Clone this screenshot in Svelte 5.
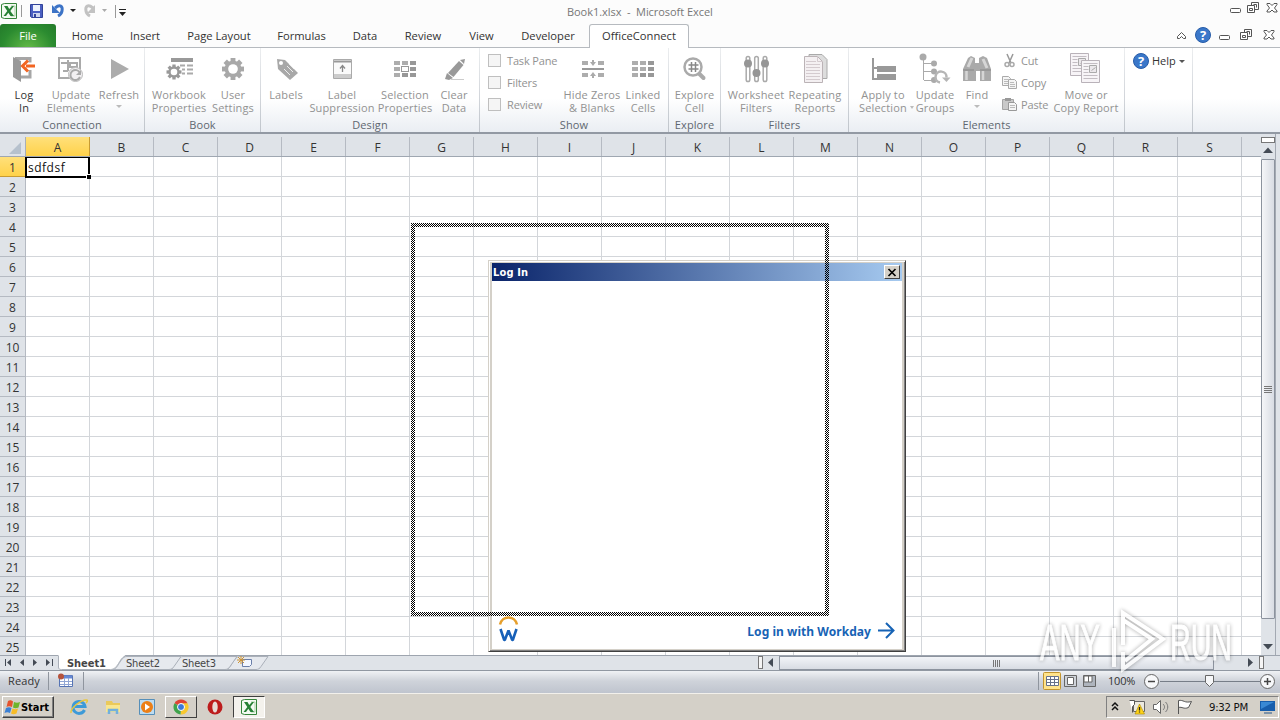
<script lang="ts">
  type Button = { icon: string; lines: string[]; width: number; enabled?: boolean; arrow?: boolean }
  type Small = { label: string; icon?: string }
  type Group = { title: string; width: number; pad?: number; items: (Button | Small[])[] }

  const gear = (cx: number, cy: number, r: number, color = '#a8a8a8') => {
    const teeth = [0, 45, 90, 135]
      .map((a) => `<rect x="${cx - r * 0.22}" y="${cy - r}" width="${r * 0.44}" height="${r * 2}" transform="rotate(${a} ${cx} ${cy})" fill="${color}"/>`)
      .join('')
    return `${teeth}<circle cx="${cx}" cy="${cy}" r="${r * 0.76}" fill="${color}"/><circle cx="${cx}" cy="${cy}" r="${r * 0.44}" fill="#fff"/>`
  }

  const cells = (skip = -1) =>
    Array.from({ length: 9 }, (_, i) => {
      const x = 5 + (i % 3) * 8
      const y = 8 + Math.floor(i / 3) * 6
      return i === skip
        ? `<rect x="${x - 0.5}" y="${y - 0.5}" width="7" height="5" fill="#fff" stroke="#999"/>`
        : `<rect x="${x}" y="${y}" width="6" height="4" fill="${i % 3 === 2 || i > 6 ? '#989898' : '#adadad'}"/>`
    }).join('')

  const page = (x: number, y: number) =>
    `<path d="M${x} ${y}h18v22h-18z" fill="#f7f4f7" stroke="#b9b2b9"/><path d="M${x + 2} ${y + 3}h14M${x + 2} ${y + 6}h5M${x + 2} ${y + 9}h5M${x + 2} ${y + 12}h5M${x + 2} ${y + 15}h14M${x + 2} ${y + 18}h14" stroke="#c3bdc3"/><path d="M${x + 8} ${y + 5}h7v7h-7zm2 5 4-3" fill="#ebe7eb" stroke="#aaa"/>`

  const icons: Record<string, string> = {
    login: `<path d="M7 5.500h15v4M22 17v7h-11" fill="none" stroke="#a6a6a6" stroke-width="3"/><path d="M5 4l8 4v21l-8-5z" fill="#999"/><path d="M27 13h-9" stroke="#f26522" stroke-width="3"/><path d="M20 7.500L14.500 13l5.500 5.500" fill="none" stroke="#f26522" stroke-width="3"/>`,
    update: `<path d="M4 5h21v20H4z" fill="#fff" stroke="#aaa" stroke-width="2"/><path d="M6 10h7V7M13 10v8M15 10h7v4h-7zM8 18h5" fill="none" stroke="#aaa" stroke-width="2"/><circle cx="20.500" cy="21.500" r="7" fill="#f2f0f2" stroke="#bbb"/><path d="M25 20a5 5 0 1 0 0 4" fill="none" stroke="#aaa" stroke-width="2"/><path d="M26 17v5h-5z" fill="#aaa"/>`,
    refresh: `<path d="M8 6l18 10-18 10z" fill="#acacac"/>`,
    workbook: `<path d="M8 5h22v4H8z" fill="#999"/><path d="M17 12.500h5M24 12.500h6M19 16.500h3M24 16.500h6M19 20.500h3M24 20.500h6" stroke="#aaa" stroke-width="2"/>${gear(11, 19, 7.5, '#999')}`,
    gear: gear(16, 16, 11),
    tag: `<path d="M7 6l8 1 13 13-8 7L8 16z" fill="#a8a8a8"/><circle cx="11" cy="10" r="2" fill="#fff"/><path d="M14 16l6 6M17 13l6 6M19 11l5 5" stroke="#ededed"/>`,
    suppress: `<path d="M7.500 6.500h18v19h-18z" fill="#fafafa" stroke="#aaa"/><path d="M8 8.500h17" stroke="#999" stroke-width="2"/><path d="M8 23h17" stroke="#ccc" stroke-width="4"/><path d="M16.500 19v-6M14 15.500l2.500-3 2.500 3" fill="none" stroke="#888" stroke-width="1.300"/>`,
    selection: cells(4),
    pencil: `<path d="M21 8l4.500 4-10 12-5.500-4z" fill="#999"/><path d="M22 7l5-1-1 5zM9 20l6 5-4 2-4-1z" fill="#999"/><path d="M13 26.500h13" stroke="#ccc"/>`,
    hide: `<path d="M6 16h22" stroke="#999" stroke-width="2"/><path d="M6 8h6v4H6zM22 8h6v4h-6zM6 20h6v4H6zM22 20h6v4h-6z" fill="#adadad"/><path d="M17 7v3M17 22v3" stroke="#aaa" stroke-width="2"/><path d="M14 9h6l-3 4zM14 23h6l-3-4z" fill="#aaa"/>`,
    linked: cells(),
    explore: `<circle cx="14" cy="14" r="8.500" fill="#fff" stroke="#aaa" stroke-width="2.500"/><path d="M20.500 21l4 4" stroke="#aaa" stroke-width="4" stroke-linecap="round"/><path d="M12.500 9v10M16.500 9v10M9.500 12h10M9.500 16h10" stroke="#888" stroke-width="1.500"/>`,
    sliders: [8, 16.5, 25]
      .map((x, i) => `<rect x="${x - 1.8}" y="3.500" width="3.600" height="25" rx="1.800" fill="#fff" stroke="#aaa" stroke-width="1.500"/><circle cx="${x}" cy="${i === 1 ? 20 : 10.5}" r="4" fill="#969696"/>`)
      .join(''),
    pages: `<path d="M10 1.500h13l5 5v19H10z" fill="#ddd" stroke="#aaa"/><path d="M5.500 3.500h13l5 5v21h-18z" fill="#f4f0f2" stroke="#bbb3b6"/><path d="M18.500 3.500v5h5M7 8.500h10M7 11.500h14M7 14.500h14M7 17.500h14M7 20.500h14M7 23.500h14M7 26.500h14" fill="none" stroke="#d4cbcf"/>`,
    apply: `<path d="M6 5v21h5M6 15h5" fill="none" stroke="#999" stroke-width="2"/><path d="M10 13h19v6H10zM10 21h19v6H10z" fill="#999"/>`,
    groups: `<path d="M4.500 4v23M5 10.500h10M5 18.500h10M5 27.500h10" stroke="#aaa"/><circle cx="4" cy="4" r="3.500" fill="#aaa"/><circle cx="15" cy="10.500" r="3" fill="#aaa"/><circle cx="15" cy="18.500" r="3" fill="#aaa"/><circle cx="15" cy="27" r="3" fill="#aaa"/><path d="M21 29.500a5.500 5.500 0 1 1 6.500-5" fill="none" stroke="#b5b5b5" stroke-width="2.500"/><path d="M23 24.500h8.500l-4 4.500z" fill="#b5b5b5"/>`,
    find: `<path d="M7 5l3-2 4 2v5h4V5l4-2 4 2 4 11v12h-11V18h-4v10H2V16z" fill="#aaa"/><path d="M7 14l4-9M22 6l4 9" stroke="#d6d6d6" stroke-width="3"/><path d="M5.500 18v9M22 18v9" stroke="#d6d6d6" stroke-width="2.500"/><path d="M2 17h11M19 17h11" stroke="#888"/>`,
    move: page(0.5, 0.5) + page(11.5, 7.5),
  }

  const smallIcons: Record<string, string> = {
    cut: `<path d="M5 1l4 9M11 1l-4 9" stroke="#999" stroke-width="1.500"/><circle cx="5" cy="11.500" r="2" fill="none" stroke="#aaa" stroke-width="1.500"/><circle cx="10" cy="11.500" r="2" fill="none" stroke="#aaa" stroke-width="1.500"/>`,
    copy: `<path d="M.5 1.500h6l2 2v7h-8z" fill="#f5f5f5" stroke="#aaa"/><path d="M6.500 4.500h6l2 2v7h-8z" fill="#f5f5f5" stroke="#aaa"/><path d="M2 4.500h4M2 6.500h4M2 8.500h4M8 7.500h4M8 9.500h5M8 11.500h5" stroke="#bbb"/>`,
    paste: `<path d="M.5 2.500h11v10H.5z" fill="#c9c9c9" stroke="#a5a5a5"/><path d="M3 1h6v3H3z" fill="#999"/><path d="M6.500 5.500h6l2 2v6h-8z" fill="#f5f5f5" stroke="#999"/><path d="M8 8.500h5M8 10.500h5" stroke="#bbb"/>`,
  }

  const groups: Group[] = [
    { title: 'Connection', width: 145, items: [
      { icon: 'login', lines: ['Log', 'In'], width: 48, enabled: true },
      { icon: 'update', lines: ['Update', 'Elements'], width: 46 },
      { icon: 'refresh', lines: ['Refresh'], width: 50, arrow: true },
    ] },
    { title: 'Book', width: 116, pad: 7, items: [
      { icon: 'workbook', lines: ['Workbook', 'Properties'], width: 54 },
      { icon: 'gear', lines: ['User', 'Settings'], width: 54 },
    ] },
    { title: 'Design', width: 219, items: [
      { icon: 'tag', lines: ['Labels'], width: 50 },
      { icon: 'suppress', lines: ['Label', 'Suppression'], width: 62 },
      { icon: 'selection', lines: ['Selection', 'Properties'], width: 64 },
      { icon: 'pencil', lines: ['Clear', 'Data'], width: 34 },
    ] },
    { title: 'Show', width: 189, pad: 8, items: [
      [{ label: 'Task Pane' }, { label: 'Filters' }, { label: 'Review' }],
      { icon: 'hide', lines: ['Hide Zeros', '& Blanks'], width: 56 },
      { icon: 'linked', lines: ['Linked', 'Cells'], width: 46 },
    ] },
    { title: 'Explore', width: 52, items: [{ icon: 'explore', lines: ['Explore', 'Cell'], width: 51 }] },
    { title: 'Filters', width: 128, pad: 6, items: [
      { icon: 'sliders', lines: ['Worksheet', 'Filters'], width: 58 },
      { icon: 'pages', lines: ['Repeating', 'Reports'], width: 60 },
    ] },
    { title: 'Elements', width: 276, pad: 7, items: [
      { icon: 'apply', lines: ['Apply to', 'Selection'], width: 54 },
      { icon: 'groups', lines: ['Update', 'Groups'], width: 50 },
      { icon: 'find', lines: ['Find'], width: 34, arrow: true },
      [{ label: 'Cut', icon: 'cut' }, { label: 'Copy', icon: 'copy' }, { label: 'Paste', icon: 'paste' }],
      { icon: 'move', lines: ['Move or', 'Copy Report'], width: 68 },
    ] },
  ]

  const tabs = [
    { name: 'Home', width: 63 },
    { name: 'Insert', width: 52 },
    { name: 'Page Layout', width: 96 },
    { name: 'Formulas', width: 69 },
    { name: 'Data', width: 58 },
    { name: 'Review', width: 58 },
    { name: 'View', width: 59 },
    { name: 'Developer', width: 74 },
  ]

  const columns = 'ABCDEFGHIJKLMNOPQRS'.split('')
  const rows = Array.from({ length: 25 }, (_, i) => i + 1)
</script>

{#snippet windowButtons(gap: number)}
  <svg class="winbtns" width={36 + gap * 2} height="13" fill="none" stroke="#555">
    <rect x=".5" y="6.500" width="10" height="4" rx="1" fill="#fff" />
    <g transform="translate({11 + gap} 0)">
      <path d="M4.500 .5h7v7h-7zM6.500 2.500h3v3" />
      <path d="M.5 3.500h7v7h-7z" fill="#fff" />
      <path d="M2.500 6.500h3v2h-3z" />
    </g>
    <path transform="translate({24 + gap * 2} 0)" d="M1 1.500h3l2 2 2-2h3v1l-2.500 3.500 2.500 3v1H8l-2-2-2 2H1v-1l2.500-3L1 2.500z" fill="#fff" />
  </svg>
{/snippet}

{#snippet help()}
  <svg width="16" height="16"><circle cx="8" cy="8" r="7.500" fill="#3a77c9" stroke="#275ca8" /><text x="8" y="12.500" text-anchor="middle" font-size="13" font-weight="bold" fill="#fff">?</text></svg>
{/snippet}

{#snippet excel(size: number)}
  <svg width={size} height={size} viewBox="0 0 16 16">
    <path d="M.5 1.500l3-1h12v15h-12l-3-1z" fill="#f4faf2" stroke="#35843a" />
    <path d="M10 3h4v10h-4" fill="none" stroke="#a8cfa6" />
    <path d="M3 3h3.500l1.700 3L11 3h2L9.300 8l3.700 5H9.500L7.300 9.800 5 13H2.500l3.800-5z" fill="#268034" />
  </svg>
{/snippet}

<div class="screen">
  <header class="titlebar">
    <div class="quick">
      {@render excel(16)}
      <svg width="108" height="18">
        <path d="M2.500 2v12M96.500 2v13" stroke="#999" />
        <path d="M11.500 1.500h12v13h-11l-1-1z" fill="#4a5fc1" stroke="#31439a" />
        <path d="M14 2h7v6h-7z" fill="#eef3fd" /><path d="M14 10h7v4h-7z" fill="#cdd5ee" /><path d="M15 11h2v3h-2z" fill="#31439a" />
        <path d="M36 5c5-4 8-2 7 3-.5 3-2 4-4 5" fill="none" stroke="#3c73c6" stroke-width="3" /><path d="M33 2v8h8z" fill="#3c73c6" />
        <path d="M51 6h6l-3 3z" fill="#222" />
        <path d="M74 5c-5-4-8-2-7 3 .5 3 2 4 4 5" fill="none" stroke="#c2c2c2" stroke-width="3" /><path d="M76 2v8h-8z" fill="#c2c2c2" />
        <path d="M83 6h5l-2.500 3z" fill="#aaa" />
        <path d="M100 6.500h7" stroke="#222" /><path d="M100 9h7l-3.500 4z" fill="#222" />
      </svg>
    </div>
    <span class="caption">Book1.xlsx&nbsp; -&nbsp; Microsoft Excel</span>
    {@render windowButtons(6)}
  </header>

  <nav class="tabs">
    <span class="file">File</span>
    {#each tabs as tab}
      <span class="tab" style:width="{tab.width}px">{tab.name}</span>
    {/each}
    <span class="tab active">OfficeConnect</span>
    <div class="tabtools">
      <svg width="11" height="10"><path d="M1.500 6.500l4-4 4 4v2h-2l-2-2-2 2h-2z" fill="#fff" stroke="#555" /></svg>
      {@render help()}
      {@render windowButtons(10)}
    </div>
  </nav>

  <section class="ribbon">
    {#each groups as group}
      <div class="group" style:width="{group.width}px">
        <div class="items" style:padding-left="{group.pad ?? 0}px">
          {#each group.items as item}
            {#if Array.isArray(item)}
              <div class="stack" class:clip={item[0].icon}>
                {#each item as small}
                  <div class="small">
                    {#if small.icon}
                      <svg width="15" height="15">{@html smallIcons[small.icon]}</svg>
                    {:else}
                      <i class="check"></i>
                    {/if}
                    <span>{small.label}</span>
                  </div>
                {/each}
              </div>
            {:else}
              <div class="big" class:enabled={item.enabled} style:width="{item.width}px">
                <svg width="32" height="32">{@html icons[item.icon]}</svg>
                {#each item.lines as line}
                  <span>{line}{#if line === 'Selection' && item.icon === 'apply'}<i class="down inline"></i>{/if}</span>
                {/each}
                {#if item.arrow}<i class="down"></i>{/if}
              </div>
            {/if}
          {/each}
        </div>
        <div class="title">{group.title}</div>
      </div>
    {/each}
    <div class="group helpgroup">
      <div class="helpbtn">{@render help()}<span>Help</span><i class="down dark"></i></div>
    </div>
  </section>

  <main class="sheet">
    <div class="grid">
      <div class="colheads">
        <div class="corner"><svg width="12" height="12"><path d="M12 0v12H0z" fill="#b6c1cd" /></svg></div>
        {#each columns as col, i}
          <div class="colhead" class:selected={i === 0}>{col}</div>
        {/each}
      </div>
      <div class="body">
        <div class="rowheads">
          {#each rows as row}
            <div class="rowhead" class:selected={row === 1}>{row}</div>
          {/each}
        </div>
        <div class="cells"><div class="cell">sdfdsf</div></div>
      </div>
    </div>
    <div class="vscroll">
      <div class="split"></div>
      <svg width="14" height="12"><path d="M2 10h10L7 4.500z" fill="#444b55" /></svg>
      <div class="vthumb"><i></i></div>
      <svg class="end" width="14" height="12"><path d="M2 3h10L7 8.500z" fill="#444b55" /></svg>
    </div>
  </main>

  <div class="sheetbar">
    <svg width="270" height="15">
      <path d="M5.500 3v7M52.500 3v7" stroke="#444b55" /><path d="M11 3v7L7 6.500zM24 3v7l-4-3.500zM33 3v7l4-3.500zM46 3v7l4-3.500z" fill="#444b55" />
      <path d="M225 13.500c4 0 5-3 7-6s4-7 8-7h28l-7 10c-1 2-3 3-5 3z" fill="#e6e9ee" stroke="#aab0b9" />
      <path d="M168 13.500c4 0 5-3 7-6s4-7 8-7h54l-7 10c-1 2-3 3-5 3z" fill="#e6e9ee" stroke="#aab0b9" />
      <path d="M112 13.500c4 0 5-3 7-6s4-7 8-7h54l-7 10c-1 2-3 3-5 3z" fill="#e6e9ee" stroke="#aab0b9" />
      <path d="M58.500 -1v12c0 2 1 2.500 3 2.500h49c4 0 6-3 8-6s3-6 7-8.500z" fill="#fff" />
      <path d="M58.500 0v11c0 2 1 2.500 3 2.500h49c4 0 6-3 8-6s3-6 7-7.500" fill="none" stroke="#aab0b9" />
      <path d="M242.500 3.500h9v5l-2 2h-7z" fill="#f3f7ff" stroke="#6b7fa9" /><path d="M241 0v8M237 4h8M238 1l6 6M244 1l-6 6" stroke="#cf9433" />
      <text x="67" y="11" class="current" textLength="39">Sheet1</text>
      <text x="126" y="11" textLength="34">Sheet2</text>
      <text x="182" y="11" textLength="34">Sheet3</text>
    </svg>
    <div class="hscroll">
      <i class="handle"></i>
      <svg width="16" height="14"><path d="M10 2v9L5 6.500z" fill="#444b55" /></svg>
      <div class="hthumb"><i></i></div>
      <svg class="right" width="16" height="14"><path d="M5 2v9l5-4.500z" fill="#444b55" /></svg>
      <i class="handle"></i>
    </div>
  </div>

  <footer class="status">
    <span class="ready">Ready</span>
    <svg class="macro" width="38" height="22">
      <path d="M.5 1v18M35.500 1v18" stroke="#8f959e" /><path d="M11.500 4.500h13v11h-13z" fill="#fff" stroke="#5674b4" /><path d="M12 6h12" stroke="#6688d4" stroke-width="3" /><path d="M12 10.500h12M12 13.500h12M16.500 7v8M20.500 7v8" stroke="#91a6d4" /><circle cx="13" cy="5.500" r="3" fill="#b5533c" />
    </svg>
    <div class="views">
      <svg width="70" height="22">
        <path d="M.5 1v18" stroke="#8f959e" /><rect x="5.500" y="1.500" width="17" height="17" rx="1" fill="#ffe38b" stroke="#c2942e" />
        <path d="M8.500 5.500h12v9h-12zM8.500 8.500h12M8.500 11.500h12M12.500 5.500v9M16.500 5.500v9" fill="#fff" stroke="#66718a" />
        <path d="M26.500 4.500h12v11h-12z" fill="#cfd3d9" stroke="#666" /><path d="M29.500 6.500h6v7h-6z" fill="#fff" stroke="#666" />
        <path d="M45.500 4.500h12v11h-12z" fill="#aeb4bd" stroke="#666" /><path d="M46 5h8v6h-8zM50.500 5v6" fill="#fff" stroke="#666" />
      </svg>
      <span class="zoom">100%</span>
      <svg width="136" height="22">
        <path d="M17 10.500h100" stroke="#777e88" /><path d="M62.500 4.500h8v7l-4 4-4-4z" fill="#f6f7f9" stroke="#666" />
        <circle cx="8.500" cy="10.500" r="7" fill="#f7f8fa" stroke="#666" /><path d="M5 10.500h7" stroke="#444" stroke-width="1.500" />
        <circle cx="124.500" cy="10.500" r="7" fill="#f7f8fa" stroke="#666" /><path d="M121 10.500h7M124.500 7v7" stroke="#444" stroke-width="1.500" />
      </svg>
    </div>
  </footer>

  <div class="taskbar">
    <div class="start">
      <svg width="17" height="16"><path d="M4 2c2-1.500 4-.5 5 .5L8 8C6 7 4 7 2.500 8z" fill="#e5532d" /><path d="M10 3c2 1 4 1 6 0l-1.500 5.500c-2 1-4 1-5.500 0z" fill="#6fb52c" /><path d="M2 9c2-1 4-1 5.500 0L6 14c-2-1-3.500-1-5.500 0z" fill="#3b80d4" /><path d="M8.500 9.500c2 1 4 1 5.500 0l-1.500 5c-2 1-4 1-5.500 0z" fill="#f7bc27" /></svg>
      <span>Start</span>
    </div>
    <div class="apps">
      <div class="app"><svg width="18" height="18"><path d="M14.500 12a6 6 0 1 1 .5-3.500H5" fill="none" stroke="#3d9ad8" stroke-width="3" /><path d="M1 15C0 10 12 1 17 2c1 1 0 2-1 3" fill="none" stroke="#eac73b" stroke-width="1.500" /></svg></div>
      <div class="app"><svg width="18" height="18"><path d="M2 3h6l1 2h7v9H2z" fill="#eac95a" /><path d="M2 7h14v7H2z" fill="#f9e68f" /><path d="M5 16v-4h8v4" fill="none" stroke="#72b0dc" stroke-width="2.500" /></svg></div>
      <div class="app"><svg width="18" height="18"><path d="M1.500 1.500h15v15h-15z" fill="#bddcf1" stroke="#568fb9" /><circle cx="9" cy="9" r="6" fill="#ec7f16" /><path d="M7 5.500l5 3.500-5 3.500z" fill="#fff" /></svg></div>
      <div class="app raised"><svg width="18" height="18"><path d="M9 9L2.500 5.200a7.500 7.500 0 0 1 13 0z" fill="#df4234" /><path d="M9 9h7.500A7.500 7.500 0 0 0 15.500 5.200H9zM9 9l-.5 7.500a7.500 7.500 0 0 0 7-11.300H9z" fill="#f8c82f" /><path d="M9 9l-.5 7.500a7.500 7.500 0 0 1-6-11.300z" fill="#40a34b" /><circle cx="9" cy="9" r="3.500" fill="#3c78da" stroke="#fff" /></svg></div>
      <div class="app"><svg width="18" height="18"><ellipse cx="9" cy="9" rx="7.500" ry="7.500" fill="#bd1c1c" /><ellipse cx="9" cy="9" rx="2.700" ry="5.500" fill="#e7dcd6" /></svg></div>
      <div class="app pressed">{@render excel(16)}</div>
    </div>
    <div class="tray">
      <svg width="80" height="20">
        <path d="M3 9l3-3 3 3M3 13l3-3 3 3" fill="none" stroke="#111" stroke-width="1.500" />
        <path d="M24.500 4.500h11v10h-11z" fill="#ece9e0" stroke="#666" /><path d="M20.500 3.500h5v4l-2 2v6" fill="#fff" stroke="#555" /><path d="M30.500 7l5 10H26z" fill="#ffd318" stroke="#a78600" stroke-width=".6" /><path d="M30.500 10v3.500M30.500 14.500v1" stroke="#222" stroke-width="1.300" />
        <path d="M44.500 7.500h3l4-4v13l-4-4h-3z" fill="#fff" stroke="#666" /><path d="M54 7c2 2 2 4 0 6M56.500 5c3 3 3 7 0 10" fill="none" stroke="#777" />
        <path d="M69.500 17V3.500c5-1 6 3 13 1l-3 6c-5 2-6-1-10 0" fill="#fff" stroke="#555" />
      </svg>
      <time>9:32 PM</time>
      <svg class="monitor" width="17" height="16"><path d="M1 2h15v10H1z" fill="#175eac" /><path d="M2 3h13L2 10z" fill="#3989d4" /><path d="M5 13h8v2H5z" fill="#7c92a8" /></svg>
    </div>
  </div>

  <div class="dialog">
    <div class="dialogtitle"><span>Log In</span><button aria-label="Close"><svg width="10" height="9"><path d="M1.500 1l7 7M8.500 1l-7 7" stroke="#000" stroke-width="1.700" /></svg></button></div>
    <div class="dialogbody">
      <svg width="20" height="26"><path d="M1 8.500C3-1 16-1 18 8.500" fill="none" stroke="#e6a02e" stroke-width="2.500" /><path d="M1.500 13l3.700 11h.6L9.500 14.500 13.200 24h.6l3.700-11" fill="none" stroke="#1760b8" stroke-width="2.600" stroke-linejoin="bevel" /></svg>
      <div class="login"><span>Log in with Workday</span><svg width="17" height="18"><path d="M0 8.500h15M8 1L15.500 8.500 8 16" fill="none" stroke="#1763b5" stroke-width="2" /></svg></div>
    </div>
  </div>

  <svg class="outline" width="418" height="393">
    <defs>
      <pattern id="checker" width="2" height="2" patternUnits="userSpaceOnUse"><path d="M0 0h1v1H0zM1 1h1v1H1z" fill="#000" shape-rendering="crispEdges" /></pattern>
    </defs>
    <path d="M0 0h418v393H0zM4 4v385h410V4z" fill="url(#checker)" fill-rule="evenodd" />
  </svg>

  <svg class="watermark" width="210" height="68">
    <text x="7" y="51" textLength="60" lengthAdjust="spacingAndGlyphs">ANY</text>
    <text x="137" y="51" textLength="62" lengthAdjust="spacingAndGlyphs">RUN</text>
    <path d="M81 19v39M90 36V4l40 26-40 30V43M90 11l29 19-27 22" />
  </svg>
</div>

<style>
  :global(body) {
    overflow: hidden;
  }

  .screen {
    position: relative;
    display: flex;
    flex-direction: column;
    width: 1280px;
    height: 720px;
    overflow: hidden;
    background: #fcfcfc;
    color: #333;
    font: 11px 'Open Sans', 'Noto Sans', sans-serif;
    white-space: nowrap;
  }

  svg {
    display: block;
    flex: none;
    overflow: visible;
  }

  .titlebar {
    display: flex;
    align-items: flex-start;
    flex: none;
    height: 24px;
    padding: 3px 2px 0 1px;
    box-sizing: border-box;
  }

  .quick {
    display: flex;
    gap: 2px;
    width: 180px;
  }

  .caption {
    width: 146px;
    margin-left: 386px;
    line-height: 18px;
    letter-spacing: -0.05px;
    color: #777;
  }

  .titlebar > .winbtns {
    margin-left: auto;
    margin-top: -1px;
  }

  .tabs {
    display: flex;
    flex: none;
    height: 24px;
    border-bottom: 1px solid #b6babf;
    box-sizing: border-box;
    line-height: 24px;
    font-size: 11.2px;
    text-align: center;
  }

  .file {
    width: 56px;
    border-radius: 3px 3px 0 0;
    background: radial-gradient(ellipse at 50% 110%, #65bb47, #2b8b30 65%, #237a2a);
    color: #fff;
  }

  .tab.active {
    width: 98px;
    height: 24px;
    margin-left: 4px;
    border: 1px solid #b6babf;
    border-bottom: 0;
    border-radius: 3px 3px 0 0;
    background: #fff;
    line-height: 22px;
  }

  .tabtools {
    display: flex;
    align-items: center;
    gap: 8px;
    margin-left: auto;
    padding-right: 5px;
  }

  .tabtools svg {
    margin-top: -1px;
  }

  .ribbon {
    display: flex;
    flex: none;
    height: 86px;
    box-sizing: border-box;
    border-bottom: 2px solid #9299a3;
    background: linear-gradient(#fff 60%, #eaeef3);
    letter-spacing: 0.15px;
  }

  .group {
    flex: none;
    height: 84px;
    box-sizing: border-box;
    border-right: 1px solid;
    border-image: linear-gradient(#eceef0, #bfc4cb) 1;
  }

  .items {
    display: flex;
    height: 69px;
    padding-top: 5px;
    box-sizing: border-box;
  }

  .big {
    display: flex;
    flex-direction: column;
    align-items: center;
    flex: none;
    line-height: 13px;
    color: #929292;
  }

  .big svg {
    margin-bottom: 3px;
  }

  .big.enabled {
    color: #333;
  }

  .down {
    margin-top: 4px;
    border: 3px solid transparent;
    border-top-color: #bbb;
    border-bottom: 0;
  }

  .down.inline {
    display: inline-block;
    margin: 0 -7px 3px 3px;
    border-width: 3px 2.5px 0;
  }

  .down.dark {
    border-top-color: #555;
    margin: 0;
  }

  .stack {
    width: 76px;
    margin-top: -3px;
  }

  .stack.clip {
    width: 50px;
    padding-left: 8px;
  }

  .small {
    display: flex;
    align-items: center;
    gap: 6px;
    height: 22px;
    color: #929292;
  }

  .small span {
    margin-top: -2px;
    letter-spacing: -0.15px;
  }

  .clip .small {
    gap: 4px;
  }

  .small svg {
    margin-top: -1px;
  }

  .check {
    width: 11px;
    height: 11px;
    margin-top: -2px;
    border: 1px solid #bfbfbf;
    background: #f5f5f5;
  }

  .title {
    height: 14px;
    line-height: 15px;
    text-align: center;
    letter-spacing: 0.1px;
    color: #606770;
  }

  .helpgroup {
    width: 68px;
  }

  .helpbtn {
    display: flex;
    align-items: center;
    gap: 3px;
    padding: 5px 0 0 8px;
    letter-spacing: -0.05px;
  }

  .helpbtn span {
    margin-top: -2px;
  }

  .sheet {
    display: flex;
    flex: none;
    height: 521px;
    background: #dfe3e8;
  }

  .grid {
    display: flex;
    flex-direction: column;
    width: 1261px;
    overflow: hidden;
    padding-top: 3px;
    box-sizing: border-box;
  }

  .colheads {
    display: flex;
    flex: none;
    height: 20px;
    box-sizing: border-box;
    border-bottom: 1px solid #9fa7b1;
    font-size: 12px;
    line-height: 21px;
    text-align: center;
  }

  .corner {
    width: 26px;
    padding: 5px 5px 0 9px;
    box-sizing: border-box;
    border-right: 1px solid #a8afb8;
  }

  .colhead {
    flex: none;
    width: 64px;
    box-sizing: border-box;
    border-right: 1px solid #b5bac2;
  }

  .colhead.selected,
  .rowhead.selected {
    background: linear-gradient(#ffe07b, #ffd24a);
    border-color: #c89b32;
  }

  .body {
    display: flex;
    height: 498px;
    overflow: hidden;
  }

  .rowhead {
    width: 26px;
    height: 20px;
    box-sizing: border-box;
    border: solid #b5bac2;
    border-width: 0 1px 1px 0;
    font-size: 12px;
    line-height: 21px;
    text-align: center;
  }

  .cells {
    flex: 1;
    background-color: #fff;
    background-image: linear-gradient(90deg, transparent 63px, #d3d6da 63px), linear-gradient(transparent 19px, #d3d6da 19px);
    background-size: 64px 20px;
  }

  .cell {
    position: relative;
    width: 65px;
    height: 21px;
    margin: 0 0 0 -1px;
    padding-left: 1px;
    box-sizing: border-box;
    border: 2px solid #000;
    border-top-width: 1px;
    font-size: 12px;
    line-height: 19px;
    letter-spacing: 0.5px;
    color: #111;
  }

  .cell::after {
    content: '';
    position: absolute;
    right: -3px;
    bottom: -3px;
    width: 4px;
    height: 4px;
    border: solid #fff;
    border-width: 1px 0 0 1px;
    background: #000;
  }

  .vscroll {
    display: flex;
    flex-direction: column;
    width: 14px;
    padding-top: 3px;
    border-right: 1px solid #a3a9b2;
  }

  .split {
    flex: none;
    height: 6px;
    box-sizing: border-box;
    border: 1px solid #777;
    background: #fff;
  }

  .vthumb {
    display: grid;
    place-items: center;
    height: 460px;
    margin-top: 4px;
    box-sizing: border-box;
    border: 1px solid #8c939e;
    border-radius: 1px;
    background: linear-gradient(90deg, #f5f6f8, #d8dce3);
  }

  .vthumb i {
    width: 8px;
    height: 7px;
    background: repeating-linear-gradient(#777 0 1px, transparent 1px 2px);
  }

  .end {
    margin: auto 0 2px;
  }

  .sheetbar {
    display: flex;
    justify-content: space-between;
    flex: none;
    height: 16px;
    box-sizing: border-box;
    border-top: 1px solid #9ea5af;
    border-bottom: 1px solid #9198a2;
    background: #dfe3e8;
  }

  .sheetbar text {
    font: 11px 'DejaVu Sans Condensed', sans-serif;
    fill: #454545;
  }

  .sheetbar .current {
    font-weight: bold;
  }

  .hscroll {
    display: flex;
    width: 506px;
    margin-right: 16px;
  }

  .handle {
    width: 3px;
    height: 11px;
    border: 1px solid #777;
    background: #f5f5f5;
  }

  .hthumb {
    display: grid;
    place-items: center;
    width: 435px;
    height: 14px;
    box-sizing: border-box;
    border: 1px solid #8c939e;
    background: linear-gradient(#f2f4f8, #d8dce3);
  }

  .hthumb i {
    width: 8px;
    height: 7px;
    background: repeating-linear-gradient(90deg, #777 0 1px, transparent 1px 2px);
  }

  .right {
    margin-left: auto;
  }

  .status {
    display: flex;
    align-items: center;
    flex: none;
    height: 22px;
    background: linear-gradient(#f0f2f5, #cfd3da 45%, #bfc4ce);
  }

  .ready {
    width: 40px;
    margin-top: -3px;
    padding-left: 8px;
    letter-spacing: 0.1px;
  }

  .views {
    display: flex;
    align-items: center;
    margin-left: auto;
    padding-right: 1px;
  }

  .zoom {
    width: 35px;
    margin-top: -3px;
    letter-spacing: -0.2px;
  }

  .taskbar {
    display: flex;
    align-items: center;
    flex: none;
    height: 27px;
    box-sizing: border-box;
    border-top: 1px solid #f2f0eb;
    background: #d4d0c8;
  }

  .start {
    display: flex;
    align-items: center;
    width: 52px;
    height: 22px;
    margin-left: 2px;
    padding-left: 1px;
    box-sizing: border-box;
    border: 1px solid;
    border-color: #fff #404040 #404040 #fff;
    box-shadow: inset -1px -1px #808080;
    font: bold 11px 'DejaVu Sans Condensed', sans-serif;
    letter-spacing: -0.05px;
    color: #000;
  }

  .apps {
    display: flex;
    padding-left: 8px;
  }

  .app {
    display: grid;
    place-items: center;
    width: 34px;
    height: 22px;
    box-sizing: border-box;
  }

  .raised {
    width: 32px;
    margin: 0 1px;
    border: 1px solid;
    border-color: #fff #404040 #404040 #fff;
  }

  .pressed {
    width: 32px;
    margin-left: 1px;
    border: 1px solid;
    border-color: #404040 #fff #fff #404040;
    background: #f4f2ed;
  }

  .tray {
    display: flex;
    align-items: center;
    width: 173px;
    height: 22px;
    margin-left: auto;
    margin-right: 1px;
    padding-left: 2px;
    box-sizing: border-box;
    border: 1px solid;
    border-color: #808080 #fff #fff #808080;
    font: 11.3px 'DejaVu Sans Condensed', sans-serif;
    letter-spacing: -0.3px;
    color: #111;
  }

  .tray time {
    width: 48px;
    margin-left: 20px;
    flex: none;
  }

  .monitor {
    margin-left: 2px;
  }

  .dialog {
    position: absolute;
    left: 488px;
    top: 260px;
    display: flex;
    flex-direction: column;
    width: 418px;
    height: 392px;
    padding: 2px 3px 2px 3px;
    box-sizing: border-box;
    border: 1px solid;
    border-color: #d4d0c8 #404040 #404040 #d4d0c8;
    box-shadow: inset 1px 1px #fff, inset -1px -1px #808080;
    background: #d4d0c8;
  }

  .dialogtitle {
    display: flex;
    align-items: center;
    justify-content: space-between;
    flex: none;
    height: 18px;
    padding: 0 2px 0 1px;
    background: linear-gradient(90deg, #0a246a, #a6caf0);
    color: #fff;
    font: bold 11px 'DejaVu Sans Condensed', sans-serif;
    letter-spacing: 0.15px;
  }

  .dialogtitle button {
    display: grid;
    place-items: center;
    width: 16px;
    height: 14px;
    padding: 0;
    border: 1px solid;
    border-color: #fff #404040 #404040 #fff;
    background: #d4d0c8;
  }

  .dialogbody {
    display: flex;
    align-items: flex-end;
    justify-content: space-between;
    flex: 1;
    padding: 0 7px 7px;
    background: #fff;
  }

  .login {
    display: flex;
    align-items: center;
    gap: 7px;
    margin-bottom: 2px;
    color: #1763b5;
    font: bold 12px 'Noto Sans', sans-serif;
    letter-spacing: 0.05px;
  }

  .outline {
    position: absolute;
    left: 411px;
    top: 223px;
  }

  .watermark {
    position: absolute;
    left: 1033px;
    top: 609px;
    fill: none;
    filter: drop-shadow(0 0 2px rgba(0, 0, 0, 0.45));
    opacity: 0.75;
  }

  .watermark text {
    fill: #fff;
    stroke: #fff;
    font: 50px 'Liberation Sans', sans-serif;
  }

  .watermark path {
    stroke: #fff;
    stroke-width: 4;
  }
</style>
